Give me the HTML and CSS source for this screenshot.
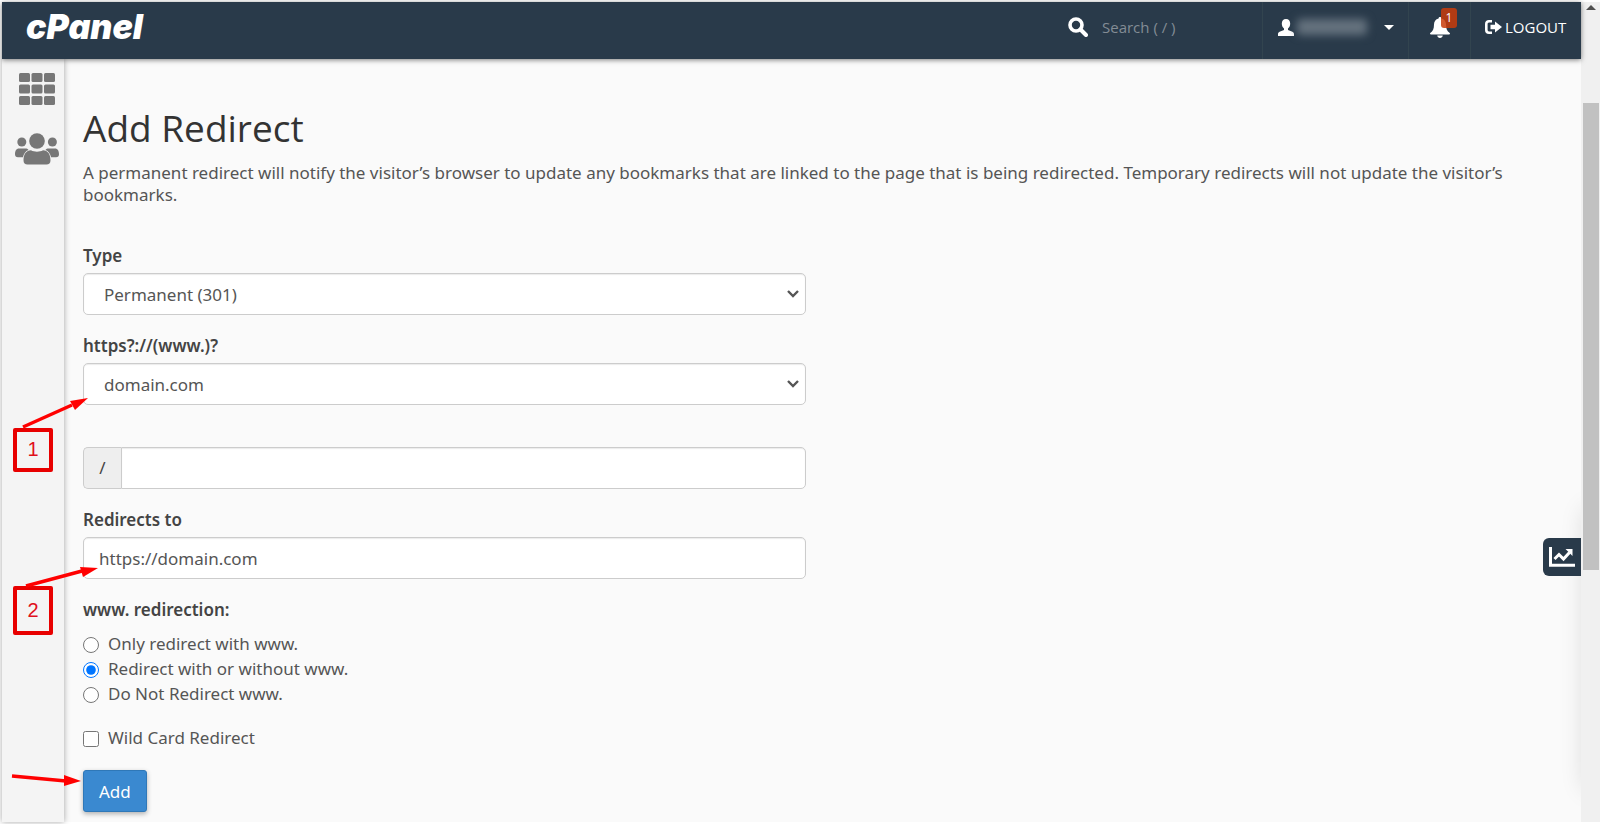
FILE: index.html
```html
<!DOCTYPE html>
<html lang="en">
<head>
  <meta charset="UTF-8" />
  <meta name="viewport" content="width=device-width, initial-scale=1.0" />
  <title>cPanel - Redirects</title>
  <link rel="stylesheet" href="styles.css">
</head>
<body>

<div class="window">
  <div class="app">
    <header class="topbar">
      <a class="logo" href="#">cPanel</a>
      <div class="search">
        <svg width="20" height="20" viewBox="0 0 20 20" fill="none" stroke="#fff" aria-hidden="true">
          <circle cx="8" cy="8" r="6" stroke-width="3.6"/>
          <path d="M12.5 12.5L18 18" stroke-width="4" stroke-linecap="round"/>
        </svg>
        <input type="text" class="search-input" placeholder="Search ( / )" aria-label="Search">
      </div>
      <button class="top-item user-menu" aria-label="Account">
        <svg width="16" height="17" viewBox="0 0 16 17" fill="#fff" aria-hidden="true">
          <path d="M8 0C5.300 0 3.800 1.900 3.800 4.600c0 2 .8 4 2.200 5v1.300L1.600 12.800C.5 13.300 0 14 0 15.200V17h16v-1.800c0-1.200-.5-1.900-1.600-2.400L10 10.900V9.600c1.400-1 2.200-3 2.200-5C12.200 1.900 10.700 0 8 0z"/>
        </svg>
        <span class="user-name"></span>
        <span class="caret"></span>
      </button>
      <button class="top-item bell" aria-label="Notifications">
        <svg width="20" height="21" viewBox="0 0 20 21" fill="#fff" aria-hidden="true">
          <path d="M10 0C9 0 8.500.7 8.600 1.600 5.500 2.200 4 4.700 4 7.500c0 4.500-1.200 6.800-3.500 8.300-.9.700-.5 1.700.5 1.700h18c1 0 1.400-1 .5-1.700C17.200 14.300 16 12 16 7.500c0-2.800-1.500-5.300-4.600-5.900C11.500.7 11 0 10 0z"/>
          <path d="M7.200 18.500h5.600C12.600 20 11.500 21 10 21s-2.600-1-2.800-2.500z"/>
        </svg>
        <span class="badge">1</span>
      </button>
      <a class="top-item logout" href="#">
        <svg width="17" height="14" viewBox="0 0 17 14" aria-hidden="true">
          <path d="M7 1.300H4C2.300 1.300 1.300 2.300 1.300 4v6c0 1.700 1 2.700 2.700 2.700h3" fill="none" stroke="#fff" stroke-width="2.600"/>
          <path d="M5.500 4.800H10V1.500L17 7l-7 5.500V9.200H5.500z" fill="#fff"/>
        </svg>
        <span>LOGOUT</span>
      </a>
    </header>

    <div class="body-row">
      <nav class="sidebar">
        <a href="#" aria-label="Home">
          <svg width="36" height="32" viewBox="0 0 36 32" fill="#777">
            <rect x="0" y="0" width="11" height="9" rx="1.500"/>
            <rect x="12.500" y="0" width="11" height="9" rx="1.500"/>
            <rect x="25" y="0" width="11" height="9" rx="1.500"/>
            <rect x="0" y="11.500" width="11" height="9" rx="1.500"/>
            <rect x="12.500" y="11.500" width="11" height="9" rx="1.500"/>
            <rect x="25" y="11.500" width="11" height="9" rx="1.500"/>
            <rect x="0" y="23" width="11" height="9" rx="1.500"/>
            <rect x="12.500" y="23" width="11" height="9" rx="1.500"/>
            <rect x="25" y="23" width="11" height="9" rx="1.500"/>
          </svg>
        </a>
        <a href="#" aria-label="User Manager">
          <svg width="44" height="32" viewBox="0 0 44 32" fill="#777">
            <circle cx="22" cy="8" r="7.800"/>
            <circle cx="6.800" cy="9" r="4.500"/>
            <circle cx="37.400" cy="9" r="4.500"/>
            <path d="M16 17.300c1.800 1 3.800 1.400 6 1.400s4.200-.4 6-1.400c4.800 0 7.500 4.200 7.500 10 0 3-1.500 4.200-4 4.200h-19c-2.500 0-4-1.200-4-4.200 0-5.800 2.700-10 7.500-10z"/>
            <path d="M4 15.600h6.500c1.200 0 2.300.5 3 1.300-3 1-4.700 3.800-5.600 7.400H3c-2 0-3-1-3-3 0-3.400 1.300-5.700 4-5.700z"/>
            <path d="M40 15.600h-6.500c-1.200 0-2.300.5-3 1.300 3 1 4.700 3.800 5.600 7.400H41c2 0 3-1 3-3 0-3.400-1.300-5.700-4-5.700z"/>
          </svg>
        </a>
      </nav>

      <main class="content">
        <h1>Add Redirect</h1>
        <p class="intro">A permanent redirect will notify the visitor’s browser to update any bookmarks that are linked to the page that is being redirected. Temporary redirects will not update the visitor’s bookmarks.</p>

        <form class="redirect-form" onsubmit="return false">
          <div class="form-group">
            <label for="type">Type</label>
            <select id="type" class="form-control">
              <option>Permanent (301)</option>
              <option>Temporary (302)</option>
            </select>
          </div>
          <div class="form-group">
            <label for="domain">https?://(www.)?</label>
            <select id="domain" class="form-control">
              <option>domain.com</option>
            </select>
          </div>
          <div class="form-group path-group">
            <label class="addon" for="path">/</label>
            <input type="text" id="path" class="form-control">
          </div>
          <div class="form-group">
            <label for="url">Redirects to</label>
            <input type="text" id="url" class="form-control" value="https://domain.com">
          </div>
          <fieldset>
            <legend>www. redirection:</legend>
            <label class="choice"><input type="radio" name="www"> Only redirect with www.</label>
            <label class="choice"><input type="radio" name="www" checked> Redirect with or without www.</label>
            <label class="choice"><input type="radio" name="www"> Do Not Redirect www.</label>
          </fieldset>
          <label class="choice wildcard"><input type="checkbox"> Wild Card Redirect</label>
          <button type="submit" class="btn-add">Add</button>
        </form>

        <div class="stats-panel">
          <button class="stats-btn" aria-label="Statistics">
            <svg width="26" height="20" viewBox="0 0 26 20" fill="none" stroke="#fff" aria-hidden="true">
              <path d="M1.500 0v18.300H26" stroke-width="3"/>
              <path d="M5.500 12l4.500-4.500 4.500 4.500 6-6.500" stroke-width="3"/>
              <path d="M16.500 2H23.500V9z" fill="#fff" stroke="none"/>
            </svg>
          </button>
        </div>
      </main>
    </div>
  </div>

  <div class="scrollbar">
    <span class="scroll-up"></span>
    <span class="scroll-thumb"></span>
  </div>
</div>

<!-- step markers -->
<div class="step step-one">1</div>
<div class="step step-two">2</div>
<svg class="arrows" width="110" height="800" viewBox="0 0 110 800" fill="#f00" stroke="#f00" aria-hidden="true">
  <path d="M23 427L72 405" stroke-width="3.500"/>
  <path d="M88 398L75 410L70 401z" stroke="none"/>
  <path d="M26 586L82 571" stroke-width="3.500"/>
  <path d="M98 568L83 577L80 567z" stroke="none"/>
  <path d="M12 776L66 781" stroke-width="3.500"/>
  <path d="M81 781L64 786L64 775z" stroke="none"/>
</svg>

</body>
</html>
```
FILE: styles.css
```css
* {
  box-sizing: border-box;
}

body {
  margin: 0;
  padding: 2px;
  background: #fff;
  font-family: "Noto Sans", "Open Sans", sans-serif;
  font-size: 17px;
  line-height: 23px;
  color: #555;
}

button, input, select {
  font-family: inherit;
  font-size: inherit;
  color: inherit;
}

.window {
  display: flex;
  min-height: calc(100vh - 4px);
}

.app {
  flex: 1;
  min-width: 0;
  display: flex;
  flex-direction: column;
}

/* top bar */
.topbar {
  display: flex;
  height: 57px;
  background: #293a4a;
  color: #fff;
  font-family: "Open Sans", sans-serif;
  position: relative;
  z-index: 2;
  box-shadow: 0 1px 5px rgba(0, 0, 0, 0.5);
}

.logo {
  padding: 3px 0 0 24px;
  font-family: Inter, sans-serif;
  font-size: 34px;
  line-height: 44px;
  font-weight: 900;
  font-style: italic;
  color: #fff;
  text-decoration: none;
}

.search {
  display: flex;
  align-items: center;
  gap: 14px;
  width: 194px;
  padding-bottom: 7px;
  margin-left: auto;
}

.search-input {
  width: 140px;
  padding: 0;
  border: 0;
  outline: 0;
  background: transparent;
  font-size: 15px;
}

.search-input::placeholder {
  color: #838c95;
}

.top-item {
  display: flex;
  align-items: center;
  padding: 0 0 7px;
  border: 0;
  border-left: 1px solid #32444f;
  background: transparent;
  color: #fff;
}

.user-menu {
  width: 146px;
  padding-left: 15px;
}

.user-name {
  width: 70px;
  height: 16px;
  margin: 0 -2px 0 3px;
  border-radius: 4px;
  background: #65727e;
  filter: blur(4px);
}

.caret {
  margin-left: 19px;
  border: 5px solid transparent;
  border-top-color: #fff;
  border-bottom: 0;
}

.bell {
  position: relative;
  width: 62px;
  padding-left: 21px;
}

.badge {
  position: absolute;
  left: 32px;
  top: 6px;
  width: 16px;
  height: 20px;
  border-radius: 3px;
  background: rgba(200, 60, 10, 0.85);
  font-size: 12px;
  line-height: 19px;
  text-align: center;
}

.logout {
  width: 111px;
  gap: 3px;
  padding-left: 14px;
  font-size: 15px;
  text-decoration: none;
}

/* side bar */
.body-row {
  flex: 1;
  display: flex;
}

.sidebar {
  display: flex;
  flex-direction: column;
  align-items: center;
  gap: 28px;
  width: 62px;
  padding: 14px 0 0 7px;
  background: #f4f4f4;
  box-shadow: 0 0 6px rgba(0, 0, 0, 0.35);
  z-index: 1;
}

.sidebar svg {
  display: block;
}

/* page */
.content {
  flex: 1;
  position: relative;
  overflow: hidden;
  padding: 43px 23px 8px 19px;
  background: #fafafa;
}

h1 {
  margin: 0 0 8px;
  font-family: "Open Sans", sans-serif;
  font-size: 37px;
  line-height: 52px;
  font-weight: 400;
  color: #333;
}

.intro {
  margin: 0 0 38px;
  line-height: 22px;
}

.redirect-form {
  width: 49%;
}

.form-group {
  margin-bottom: 19px;
}

.form-group label,
legend {
  display: block;
  margin-bottom: 6px;
  font-weight: 600;
  color: #444;
}

.form-control {
  display: block;
  width: 100%;
  height: 42px;
  padding: 0 15px;
  border: 1px solid #ccc;
  border-radius: 5px;
  background: #fff;
  box-shadow: inset 0 1px 1px rgba(0, 0, 0, 0.08);
}

select.form-control {
  padding: 0 30px 0 20px;
  appearance: none;
  background: #fff url("data:image/svg+xml,%3Csvg xmlns='http://www.w3.org/2000/svg' width='12' height='8'%3E%3Cpath d='M1 1l5 5 5-5' fill='none' stroke='%23555' stroke-width='2.4'/%3E%3C/svg%3E") no-repeat right 6px center;
}

.path-group {
  display: flex;
  padding-top: 23px;
}

.path-group .addon {
  width: 38px;
  height: 42px;
  margin: 0;
  border: 1px solid #ccc;
  border-right: 0;
  border-radius: 5px 0 0 5px;
  background: #eee;
  font-weight: 400;
  line-height: 40px;
  text-align: center;
}

.path-group .form-control {
  flex: 1;
  border-radius: 0 5px 5px 0;
}

fieldset {
  margin: 0 0 19px;
  padding: 0;
  border: 0;
}

legend {
  margin-bottom: 10px;
  padding: 0;
}

.choice {
  display: flex;
  align-items: center;
  gap: 9px;
  line-height: 25px;
}

.choice input {
  width: 16px;
  height: 16px;
  margin: 3px 0 0;
}

.wildcard {
  margin-bottom: 20px;
}

.btn-add {
  display: block;
  height: 42px;
  padding: 0 15px;
  border: 1px solid #2f78b8;
  border-radius: 3px;
  background: #3a89d0;
  color: #fff;
  box-shadow: 0 2px 5px rgba(0, 0, 0, 0.3);
}

/* stats drawer, closed against the right edge */
.stats-panel {
  position: absolute;
  top: 450px;
  right: -24px;
  width: 20px;
  height: 280px;
  box-shadow: 0 0 24px rgba(0, 0, 0, 0.15);
}

.stats-btn {
  position: absolute;
  top: 29px;
  right: 24px;
  display: flex;
  align-items: center;
  justify-content: center;
  width: 38px;
  height: 38px;
  padding: 0;
  border: 0;
  border-radius: 6px 0 0 6px;
  background: #293a4a;
}

.scrollbar {
  display: flex;
  flex-direction: column;
  align-items: center;
  width: 19px;
  background: #f0f0f0;
}

.scroll-up {
  margin: 3px 0 93px;
  border: 5px solid transparent;
  border-top: 0;
  border-bottom-color: #505050;
}

.scroll-thumb {
  width: 16px;
  height: 57%;
  background: #c1c1c1;
}

/* red markers over the page */
.step {
  position: absolute;
  z-index: 3;
  left: 13px;
  width: 40px;
  border: 4px solid #e80000;
  border-radius: 2px;
  font-family: "Liberation Sans", Arial, sans-serif;
  font-size: 20px;
  color: #e0101c;
  text-align: center;
}

.step-one {
  top: 428px;
  height: 44px;
  line-height: 34px;
}

.step-two {
  top: 586px;
  height: 49px;
  line-height: 41px;
}

.arrows {
  position: absolute;
  top: 0;
  left: 0;
  z-index: 4;
  pointer-events: none;
}
```
